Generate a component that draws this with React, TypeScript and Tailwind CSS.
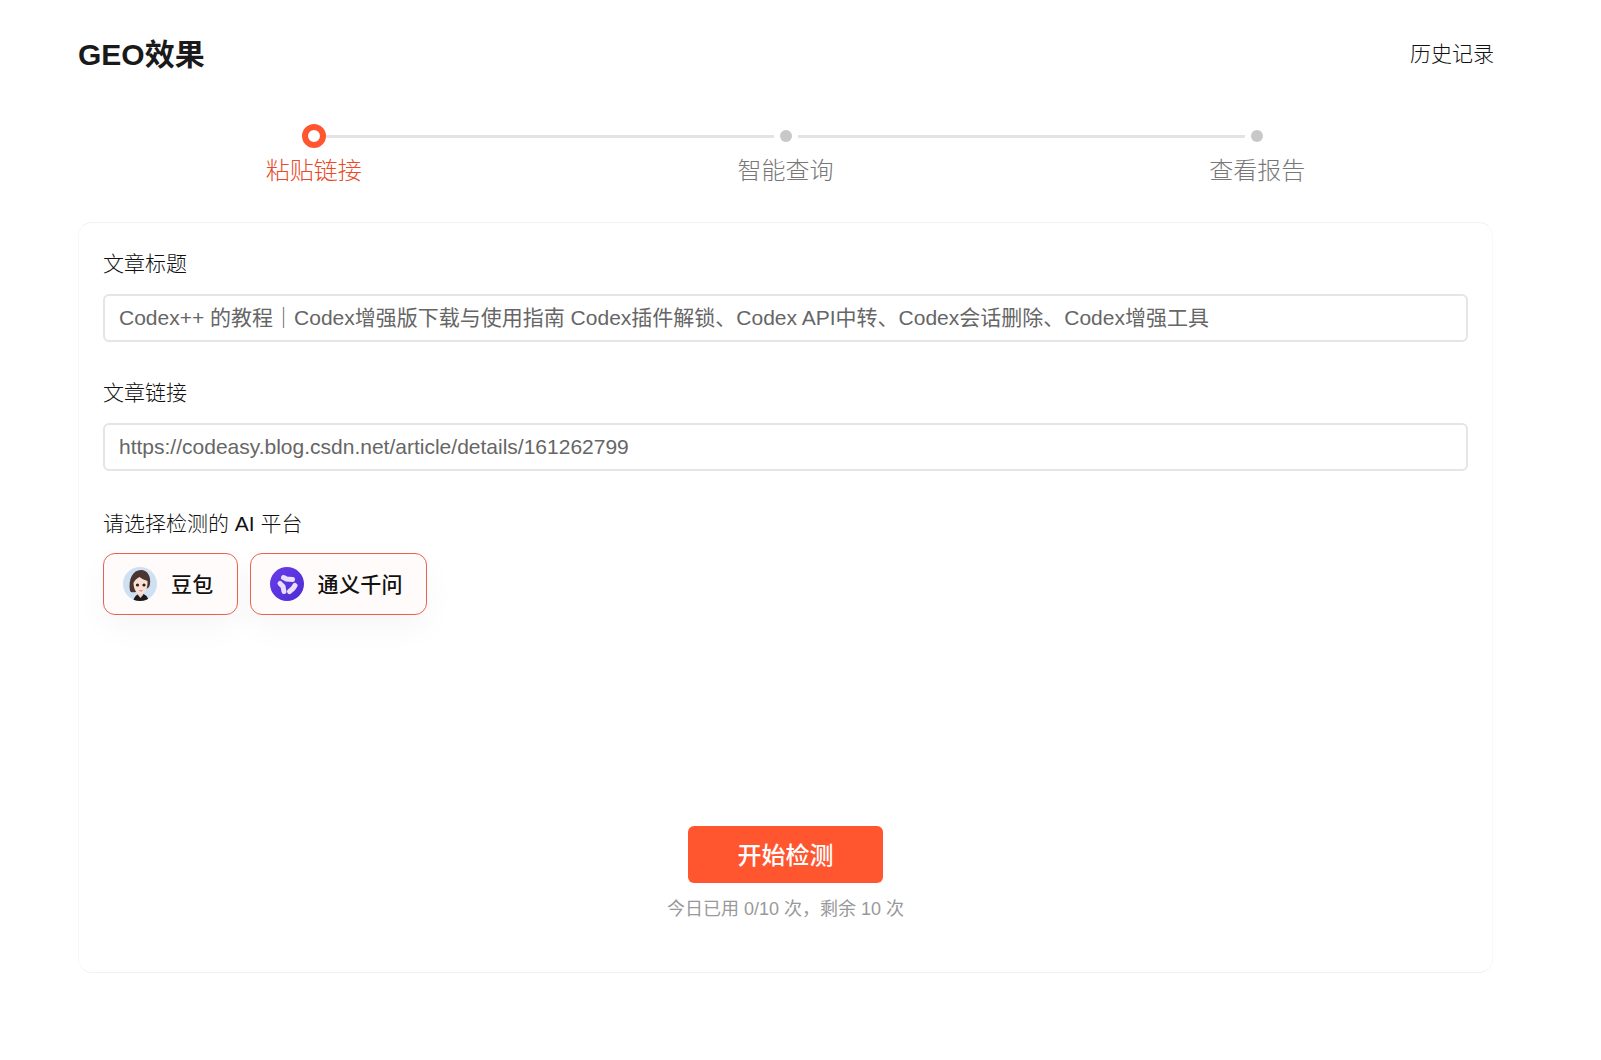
const font = { fontFamily: '"Liberation Sans", "Noto Sans CJK SC", sans-serif' };

function DoubaoAvatar() {
  return (
    <svg width="34" height="34" viewBox="0 0 34 34" className="shrink-0">
      <defs>
        <clipPath id="avatarClip">
          <circle cx="17" cy="17" r="17" />
        </clipPath>
      </defs>
      <g clipPath="url(#avatarClip)">
        <rect width="34" height="34" fill="#cfe0f2" />
        <path d="M7 24C5 12 10 3 18 3c7 0 10 7 9 14-.3 2-1 3-2 4l-12 4c-2 0-5 1-6-1z" fill="#4a3532" />
        <path d="M10 35c1-6 4-8 8-8s7 2 8 8z" fill="#1e1a1c" />
        <path d="M15 24h5v4l-2.500 3-2.500-3z" fill="#f4d5c6" />
        <path d="M10.500 16c1-3 4-5 6-6 2 2 6 3 8 4 .5 6-2 13-6.500 13.500-4.500 .5-7.500-6-7.500-11.500z" fill="#f9e0d4" />
        <circle cx="14.500" cy="18" r="1.600" fill="#2d1d1b" />
        <circle cx="21" cy="18" r="1.600" fill="#2d1d1b" />
        <path d="M16.500 23.500c1 .6 2 .6 3 0" stroke="#c9655d" strokeWidth="1" fill="none" />
      </g>
    </svg>
  );
}

function QianwenLogo() {
  return (
    <svg width="34" height="34" viewBox="0 0 34 34" className="shrink-0">
      <defs>
        <linearGradient id="qwBg" x1="0" y1="0" x2="1" y2="1">
          <stop offset="0" stopColor="#6a3de8" />
          <stop offset="1" stopColor="#4b2bd6" />
        </linearGradient>
      </defs>
      <circle cx="17" cy="17" r="17" fill="url(#qwBg)" />
      <g fill="none" stroke="#eadffb" strokeLinecap="round" strokeWidth="5">
        <path d="M13.500 10.500l3 1.500 6 .5" />
        <path d="M10 16.500l3 3 1 5" />
        <path d="M25 18.500l-2 3-3.500 3" />
      </g>
    </svg>
  );
}

function Field({ label, value }: { label: string; value: string }) {
  return (
    <div>
      <div className="text-[21px] leading-[30px] font-light text-[#111]">{label}</div>
      <div className="mt-[15px] h-[48px] flex items-center px-[14px] rounded-[6px] border-2 border-[#e5e5e5] text-[21px] text-[#666] whitespace-nowrap">
        {value}
      </div>
    </div>
  );
}

function Chip({ name, icon }: { name: string; icon: React.ReactNode }) {
  return (
    <div className="h-[62px] flex items-center gap-[14px] pl-[19px] pr-[23px] rounded-[12px] border border-[#e8634f] bg-[#fffbfa] shadow-[0_12px_32px_rgba(0,0,0,0.04)]">
      {icon}
      <span className="pt-[2px] text-[21px] font-medium text-[#111] tracking-[0.3px]">{name}</span>
    </div>
  );
}

export default function App() {
  return (
    <div className="min-h-[1060px] bg-white" style={font}>
      <div className="ml-[78px] w-[1415px] pt-[33px]">
        <div className="flex items-center justify-between h-[42px]">
          <h1 className="text-[30px] font-bold text-[#1a1a1a]">GEO效果</h1>
          <button className="text-[21px] font-light text-[#111] -mr-[1px]">历史记录</button>
        </div>

        <div className="mt-[49px]">
          <div className="flex items-center h-[24px] pl-[224px] pr-[230px]">
            <div className="w-[24px] h-[24px] rounded-full border-[6px] border-[#ff5630] bg-white shrink-0" />
            <div className="flex-1 h-[3px] bg-[#e3e3e3] mr-[6px]" />
            <div className="w-[12px] h-[12px] rounded-full bg-[#c8c8c8] shrink-0" />
            <div className="flex-1 h-[3px] bg-[#e3e3e3] mx-[6px]" />
            <div className="w-[12px] h-[12px] rounded-full bg-[#c8c8c8] shrink-0" />
          </div>
          <div className="grid grid-cols-3 mt-[6px] text-[24px] leading-[34px] font-light text-center">
            <div className="text-[#ea4a28]">粘贴链接</div>
            <div className="text-[#777]">智能查询</div>
            <div className="text-[#777]">查看报告</div>
          </div>
        </div>

        <div className="mt-[34px] h-[751px] rounded-[14px] border border-y-[#f1f1f1] border-x-[#f8f8f8] px-[24px] pt-[26px] flex flex-col">
          <div className="flex flex-col gap-[36px]">
            <Field label="文章标题" value="Codex++ 的教程｜Codex增强版下载与使用指南 Codex插件解锁、Codex API中转、Codex会话删除、Codex增强工具" />
            <Field label="文章链接" value="https://codeasy.blog.csdn.net/article/details/161262799" />
          </div>
          <div className="mt-[38px] text-[21px] leading-[30px] font-light text-[#111]">请选择检测的 AI 平台</div>
          <div className="mt-[14px] flex gap-[12px]">
            <Chip name="豆包" icon={<DoubaoAvatar />} />
            <Chip name="通义千问" icon={<QianwenLogo />} />
          </div>
          <div className="mt-[211px] flex flex-col items-center">
            <button className="w-[195px] h-[57px] pt-[2px] rounded-[6px] bg-[#ff5630] text-white text-[24px] font-medium">开始检测</button>
            <div className="mt-[14px] text-[18px] leading-[24px] text-[#999]">今日已用 0/10 次，剩余 10 次</div>
          </div>
        </div>
      </div>
    </div>
  );
}
